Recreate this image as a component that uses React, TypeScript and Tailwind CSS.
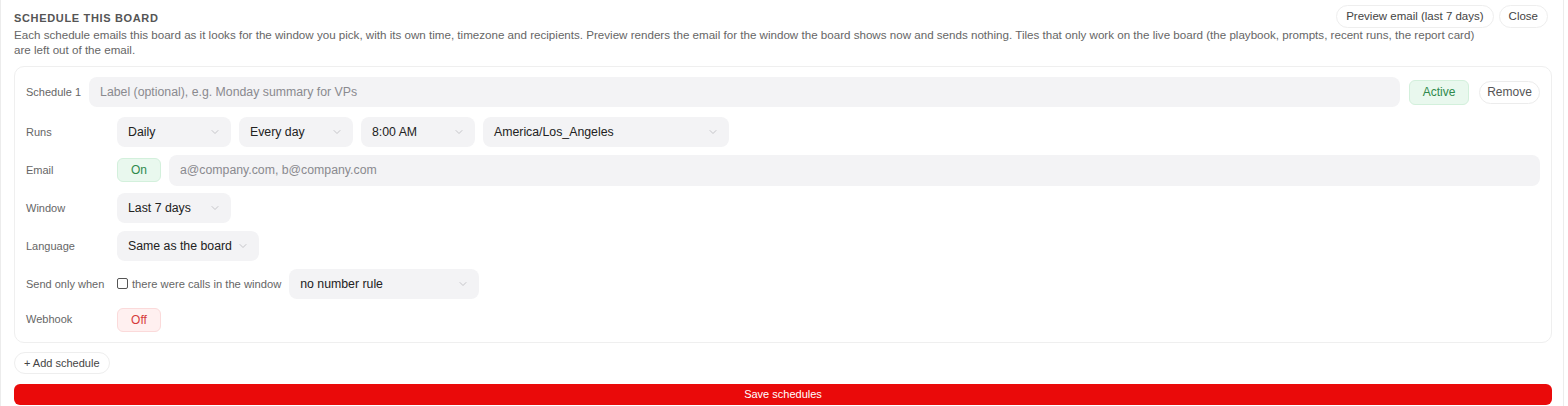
import { ChevronDown } from "lucide-react"

const font = { fontFamily: "'Liberation Sans', Arial, sans-serif" }

function Select({ value, width }: { value: string; width: string }) {
  return (
    <div className={`flex h-[30px] ${width} items-center justify-between whitespace-nowrap rounded-lg bg-[#f3f3f5] pl-[11px] pr-[10px] text-[12.3px] text-[#222]`}>
      <span>{value}</span>
      <ChevronDown className="h-3 w-3 text-[#b5b5ba]" strokeWidth={1.5} />
    </div>
  )
}

function Row({ label, className = "h-[30px]", children }: { label: string; className?: string; children: React.ReactNode }) {
  return (
    <div className={`flex items-center ${className}`}>
      <span className="w-[91px] shrink-0 whitespace-nowrap text-[11px] text-[#666]">{label}</span>
      <div className="flex flex-1 items-center gap-2">{children}</div>
    </div>
  )
}

export default function App() {
  return (
    <div style={font} className="h-[406px] w-[1564px] border-x border-[#ececec] bg-white">
      <div className="px-[13px] pt-[5px]">
        <div className="flex items-start justify-between">
          <div className="pt-[5px] text-[11px] font-bold tracking-[0.06em] text-[#555]">SCHEDULE THIS BOARD</div>
          <div className="flex gap-[5px] pr-[2px]">
            <button className="h-[23px] rounded-full border border-[#eeeeee] px-[9px] text-[11.5px] text-[#444]">Preview email (last 7 days)</button>
            <button className="h-[23px] rounded-full border border-[#eeeeee] px-[9px] text-[11.5px] text-[#444]">Close</button>
          </div>
        </div>
        <p className="-mt-[1px] w-[1475px] text-[11.6px] leading-[15px] text-[#666]">
          Each schedule emails this board as it looks for the window you pick, with its own time, timezone and recipients. Preview renders the email for the window the board shows now and sends nothing. Tiles that only work on the live board (the playbook, prompts, recent runs, the report card) are left out of the email.
        </p>

        <div className="mt-[9px] w-[1538px] rounded-[10px] border border-[#efefef] px-[11px] pt-[10px] pb-[10px]">
          <div className="flex items-center">
            <span className="mr-2 whitespace-nowrap text-[11px] text-[#666]">Schedule 1</span>
            <div className="flex h-[30px] flex-1 items-center rounded-lg bg-[#f3f3f5] px-[11px] text-[12.3px] text-[#8a8a8f]">
              Label (optional), e.g. Monday summary for VPs
            </div>
            <span className="ml-[9px] flex h-[25px] w-[60px] items-center justify-center rounded-md border border-[#d3f0dc] bg-[#e9f8ee] text-[12px] text-[#2f8a4c]">Active</span>
            <span className="ml-[10px] flex h-[23px] w-[61px] items-center justify-center rounded-full border border-[#ececec] text-[12px] text-[#555]">Remove</span>
          </div>

          <div className="mt-[10px] flex flex-col gap-2">
            <Row label="Runs">
              <Select value="Daily" width="w-[114px]" />
              <Select value="Every day" width="w-[114px]" />
              <Select value="8:00 AM" width="w-[114px]" />
              <Select value="America/Los_Angeles" width="w-[246px]" />
            </Row>
            <Row label="Email">
              <span className="flex h-[24px] w-[44px] items-center justify-center rounded-md border border-[#d3f0dc] bg-[#e9f8ee] text-[12px] text-[#2f8a4c]">On</span>
              <div className="flex h-[31px] flex-1 items-center rounded-lg bg-[#f3f3f5] px-[11px] text-[12.3px] text-[#8a8a8f]">a@company.com, b@company.com</div>
            </Row>
            <Row label="Window">
              <Select value="Last 7 days" width="w-[114px]" />
            </Row>
            <Row label="Language">
              <Select value="Same as the board" width="w-[142px]" />
            </Row>
            <Row label="Send only when">
              <label className="flex items-center gap-[4px] whitespace-nowrap text-[11.2px] text-[#666]">
                <span className="h-[11px] w-[11px] rounded-[2px] border border-[#555] bg-white" />
                there were calls in the window
              </label>
              <Select value="no number rule" width="w-[190px]" />
            </Row>
            <Row label="Webhook" className="h-[25px]">
              <span className="flex h-[24px] w-[44px] items-center justify-center rounded-md border border-[#fbdada] bg-[#fff0f0] text-[12px] text-[#d63b3b]">Off</span>
            </Row>
          </div>
        </div>

        <button className="mt-[9px] h-[22px] rounded-full border border-[#eeeeee] px-[9px] text-[11px] text-[#444]">+ Add schedule</button>

        <button className="mt-[10px] block h-[21px] w-[1538px] rounded-md bg-[#ea0a0a] text-[11px] text-white">Save schedules</button>
      </div>
    </div>
  )
}
